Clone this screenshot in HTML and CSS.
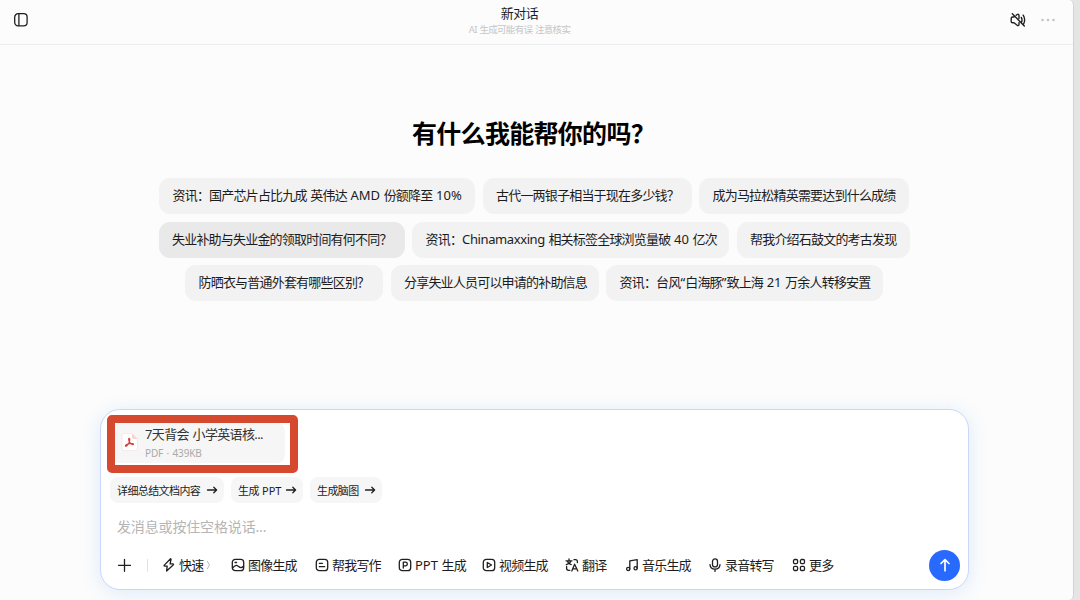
FILE: index.html
```html
<!DOCTYPE html>
<html lang="zh-CN">
<head>
<meta charset="utf-8">
<title>新对话</title>
<link rel="stylesheet" href="styles.css">
</head>
<body>
<div class="window">
  <header class="topbar">
    <svg class="icon sidebar-icon" width="16" height="16" viewBox="0 0 16 16"><rect x="1.7" y="1.7" width="12.4" height="12.2" rx="3.4"/><path d="M5.9 2v11.6"/></svg>
    <div class="titles">
      <div class="title">新对话</div>
      <div class="subtitle">AI 生成可能有误 注意核实</div>
    </div>
    <div class="top-actions">
      <svg class="icon mute-icon" width="18" height="18" viewBox="0 0 18 18"><path d="M5 6H3.6C2.7 6 2.2 6.600 2.200 7.400v3c0 .9.500 1.400 1.400 1.400H5l3.200 2.500c.9.600 1.800.2 1.800-.9v-1.700M7.200 4.300l1-.8c.9-.600 1.800-.2 1.800.9v3.200M12.300 6.400c.8 1.500.9 3.300.2 4.800M14.200 4.200c1.700 2.800 1.800 6.200.3 9.100M3.300 2.800l12 12.200"/></svg>
      <svg class="dots" width="16" height="4" viewBox="0 0 16 4"><circle cx="2.500" cy="2" r="1.300"/><circle cx="8" cy="2" r="1.300"/><circle cx="13.500" cy="2" r="1.300"/></svg>
    </div>
  </header>

  <main class="main">
    <h1 class="heading">有什么我能帮你的吗？</h1>
    <div class="suggestions">
      <div class="row">
        <div class="chip w316">资讯：国产芯片占比九成 英伟达 <span class="lat">AMD</span> 份额降至 <span class="lat">10%</span></div>
        <div class="chip w209">古代一两银子相当于现在多少钱？</div>
        <div class="chip w210">成为马拉松精英需要达到什么成绩</div>
      </div>
      <div class="row">
        <div class="chip w246 hover">失业补助与失业金的领取时间有何不同？</div>
        <div class="chip w317">资讯：<span class="lat tight">Chinamaxxing</span> 相关标签全球浏览量破 <span class="lat">40</span> 亿次</div>
        <div class="chip w173">帮我介绍石鼓文的考古发现</div>
      </div>
      <div class="row">
        <div class="chip w198">防晒衣与普通外套有哪些区别？</div>
        <div class="chip w208">分享失业人员可以申请的补助信息</div>
        <div class="chip w277">资讯：台风<span class="lat">“</span>白海豚<span class="lat">”</span>致上海 <span class="lat">21</span> 万余人转移安置</div>
      </div>
    </div>

    <section class="composer">
      <div class="file">
        <svg class="pdf" width="17" height="18" viewBox="0 0 17 18"><path class="sheet" d="M3 .5h8l5.500 5.500v9.500a2 2 0 0 1-2 2H3a2 2 0 0 1-2-2v-13a2 2 0 0 1 2-2z"/><path class="fold" d="M11 .5 16.500 6H13a2 2 0 0 1-2-2z"/><path class="mark" d="M8 5.300c1.200 0 .9 2.600-.3 4.900C6.700 12 5.200 13.700 4.500 13.200c-.8-.800 1.500-2.200 4-2.600 2-.3 4.300-.1 4 .7-.4.9-2.700-.3-3.800-1.900C7.700 7.900 7.200 5.500 8 5.300z"/></svg>
        <div class="file-text">
          <div class="file-name">7天背会 小学英语核...</div>
          <div class="file-meta">PDF · 439KB</div>
        </div>
        <div class="callout"></div>
      </div>
      <div class="doc-actions">
        <div class="doc-chip w114">详细总结文档内容<svg class="icon" width="12" height="12" viewBox="0 0 12 12"><path d="M1.500 6h9M7.800 3.200 10.600 6 7.800 8.800"/></svg></div>
        <div class="doc-chip w72"><span>生成 <span class="lat">PPT</span></span><svg class="icon" width="12" height="12" viewBox="0 0 12 12"><path d="M1.500 6h9M7.800 3.200 10.600 6 7.800 8.800"/></svg></div>
        <div class="doc-chip w72">生成脑图<svg class="icon" width="12" height="12" viewBox="0 0 12 12"><path d="M1.500 6h9M7.800 3.200 10.600 6 7.800 8.800"/></svg></div>
      </div>
      <div class="placeholder">发消息或按住空格说话...</div>
      <div class="toolbar">
        <svg class="icon plus" width="14" height="14" viewBox="0 0 14 14"><path d="M7.500 1.300v12M1.500 7.300h12"/></svg>
        <span class="divider"></span>
        <div class="tool t-fast"><svg class="icon" width="14" height="14" viewBox="0 0 14 14"><path d="M8.300 1 2.300 7.100c-.4.500-.2 1 .4 1h2.500L4.600 13l6.600-6.100c.5-.500.3-1-.4-1H8.100L9 1.500C9.100.8 8.700.6 8.300 1z"/></svg><span>快速</span><svg class="chev" width="5" height="10" viewBox="0 0 5 10"><path d="M1.200 1 3.500 5 1.200 9"/></svg></div>
        <div class="tool t-image"><svg class="icon" width="14" height="14" viewBox="0 0 14 14"><rect x="1.300" y="1.300" width="11.400" height="11.400" rx="3"/><path d="M1.600 10.300c1.900-3.300 4.200-3.500 6-1.700 1.400 1.200 3.300 1.300 4.900-.4M4 4.500h1.600"/></svg><span>图像生成</span></div>
        <div class="tool t-write"><svg class="icon" width="14" height="14" viewBox="0 0 14 14"><rect x="1.300" y="1.300" width="11.400" height="11.400" rx="3"/><path d="M4.300 5.300h3.200M4.300 8.700h5.400"/></svg><span>帮我写作</span></div>
        <div class="tool t-ppt"><svg class="icon" width="14" height="14" viewBox="0 0 14 14"><rect x="1.300" y="1.300" width="11.400" height="11.400" rx="3"/><path d="M5.300 10.100V4.200h2.200a1.800 1.800 0 0 1 0 3.600H5.300"/></svg><span><span class="lat">PPT</span> 生成</span></div>
        <div class="tool t-video"><svg class="icon" width="14" height="14" viewBox="0 0 14 14"><rect x="1.300" y="1.300" width="11.400" height="11.400" rx="3"/><path d="M5.300 4.500v5L9.500 7z"/></svg><span>视频生成</span></div>
        <div class="tool t-trans"><svg class="icon" width="14" height="14" viewBox="0 0 14 14"><path d="M1 2.800h6M4 1v1.800M2.200 3c.7 1.800 2.200 3 4 3.600M5.900 3C5.300 4.700 3.500 6 1.300 6.600M9 1.700h1.500c1.200 0 1.900.7 1.900 2v.8M1.600 8.500v1.800c0 1.200.8 2 2 2h1.200M6.800 13l2.800-6.800L12.800 13M7.800 10.900h3.900"/></svg><span>翻译</span></div>
        <div class="tool t-music"><svg class="icon" width="14" height="14" viewBox="0 0 14 14"><circle cx="3.200" cy="10.900" r="1.600"/><circle cx="10.600" cy="10.200" r="1.600"/><path d="M4.800 10.900V2.900l7.400-1.200v8.500"/></svg><span>音乐生成</span></div>
        <div class="tool t-rec"><svg class="icon" width="14" height="14" viewBox="0 0 14 14"><rect x="4.500" y=".9" width="5" height="8" rx="2.500"/><path d="M2 6.600c.2 2.700 2.200 4.500 5 4.500s4.800-1.800 5-4.500M7 11.200v2.200"/></svg><span>录音转写</span></div>
        <div class="tool t-more"><svg class="icon" width="14" height="14" viewBox="0 0 14 14"><rect x="1.500" y="1.500" width="4.100" height="4.100" rx="1.300"/><rect x="8.400" y="1.500" width="4.100" height="4.100" rx="1.300"/><rect x="1.500" y="8.400" width="4.100" height="4.100" rx="1.300"/><rect x="8.400" y="8.400" width="4.100" height="4.100" rx="1.300"/></svg><span>更多</span></div>
        <div class="send"><svg width="14" height="16" viewBox="0 0 14 16"><path d="M7 13.700V2.700M3 6.500 7 2.600l4 3.900"/></svg></div>
      </div>
    </section>
  </main>
</div>
</body>
</html>
```
FILE: styles.css
```css
* { box-sizing: border-box; }
body {
  margin: 0;
  width: 1080px;
  height: 600px;
  overflow: hidden;
  background: #e5e5e5;
  font-family: "Noto Sans", "Noto Sans CJK SC", sans-serif;
  font-size: 13px;
  letter-spacing: -0.8px;
  word-spacing: 1px;
  color: #1c1c1c;
  white-space: nowrap;
}
.window {
  width: 1074px;
  height: 600px;
  background: #fcfcfc;
  border-right: 1px solid #d2d2d2;
  border-radius: 0 5px 5px 0;
  overflow: hidden;
}
.icon {
  fill: none;
  stroke: #202020;
  stroke-width: 1.3;
  stroke-linecap: round;
  stroke-linejoin: round;
  flex: none;
}
.lat { letter-spacing: 0; }
.tight { letter-spacing: -0.4px; }

.topbar {
  display: grid;
  grid-template-columns: 200px 1fr 200px;
  height: 45px;
  border-bottom: 1px solid #ececec;
}
.sidebar-icon { margin: 12px 0 0 13px; }
.titles { text-align: center; padding-right: 34px; }
.title { font-size: 13px; line-height: 18px; padding-top: 4px; letter-spacing: -0.5px; }
.subtitle { font-size: 9.5px; line-height: 13px; padding-top: 1px; color: #c6c6c6; letter-spacing: -0.7px; }
.top-actions { display: flex; align-items: center; justify-content: flex-end; gap: 13px; padding: 0 17px 4px 0; }
.mute-icon { stroke-width: 1.4; }
.dots { fill: #c4c4c4; }

.heading {
  margin: 0;
  padding: 69px 0 0 412px;
  font-size: 25px;
  line-height: 38px;
  font-weight: 700;
  letter-spacing: -0.7px;
  color: #000;
}
.suggestions {
  width: 751px;
  margin: 26px 0 0 158.5px;
  display: flex;
  flex-direction: column;
  gap: 7.5px;
}
.row { display: flex; justify-content: center; gap: 7.5px; }
.chip {
  height: 36px;
  line-height: 35px;
  padding-left: 13.5px;
  border-radius: 11px;
  background: #f2f2f2;
  flex: none;
}
.hover { background: #e9e9e9; }
.w316 { width: 316px; }
.w209 { width: 209px; }
.w210 { width: 210px; }
.w246 { width: 246px; }
.w317 { width: 317px; }
.w173 { width: 173px; }
.w198 { width: 198px; }
.w208 { width: 208px; }
.w277 { width: 277px; }
.w114 { width: 114px; }
.w72 { width: 72px; }

.composer {
  width: 869px;
  height: 181px;
  margin: 108px 0 0 100px;
  padding: 13px 8px 0 9px;
  background: #fff;
  border: 1px solid #c9d8fa;
  border-radius: 20px;
  box-shadow: 0 3px 20px rgba(60, 145, 240, 0.16);
}
.file {
  position: relative;
  display: flex;
  width: 175px;
  height: 40px;
  padding-left: 11px;
  background: #f6f6f6;
  border-radius: 8px;
}
.pdf { margin: 10px 7px 0 0; flex: none; }
.sheet { fill: #fff; stroke: #f4dfdc; stroke-width: 0.6; }
.fold { fill: #f8d2cf; }
.mark { fill: none; stroke: #d63a35; stroke-width: 1.1; }
.file-name { font-size: 13px; line-height: 18px; padding-top: 2px; letter-spacing: -0.65px; color: #333; }
.file-meta { font-size: 10px; line-height: 14px; padding-top: 3px; letter-spacing: -0.15px; color: #aaa; }
.callout {
  position: absolute;
  left: -3px;
  top: -8px;
  width: 191px;
  height: 58px;
  border: 8px solid #d5492e;
  border-radius: 5px;
}
.doc-actions { display: flex; gap: 7px; margin-top: 14px; }
.doc-chip {
  display: flex;
  align-items: center;
  justify-content: space-between;
  height: 26px;
  padding: 0 6px 1px 7px;
  border-radius: 8px;
  background: #f6f6f6;
  font-size: 11px;
  letter-spacing: -0.6px;
}
.placeholder {
  margin: 14px 0 0 7px;
  font-size: 14px;
  line-height: 20px;
  letter-spacing: -0.15px;
  color: #b5b5b5;
}
.toolbar { display: flex; align-items: center; height: 32px; margin-top: 12px; padding-left: 7px; }
.divider { width: 1px; height: 13px; margin-left: 16px; background: #e2e2e2; }
.tool { display: flex; align-items: center; flex: none; gap: 3px; line-height: 20px; }
.t-fast { width: 69px; margin-left: 14px; }
.t-image { width: 84px; }
.t-write { width: 83px; }
.t-ppt { width: 84px; }
.t-video { width: 83px; }
.t-trans { width: 60px; }
.t-music { width: 83px; }
.t-rec { width: 84px; }
.t-more { width: 45px; }
.chev { fill: none; stroke: #bbb; }
.send {
  display: flex;
  align-items: center;
  justify-content: center;
  width: 31px;
  height: 31px;
  margin-left: auto;
  border-radius: 50%;
  background: #2869ff;
}
.send svg { fill: none; stroke: #fff; stroke-width: 1.7; stroke-linecap: round; stroke-linejoin: round; }
```
